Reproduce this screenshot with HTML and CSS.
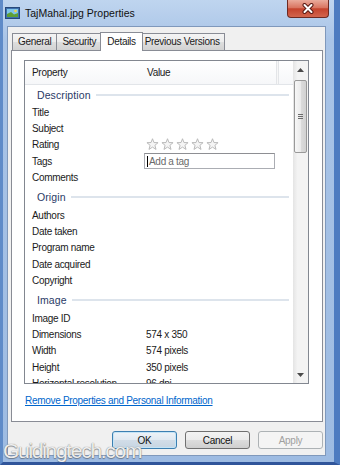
FILE: index.html
```html
<!DOCTYPE html>
<html lang="en">
<head>
    <meta charset="UTF-8">
    <title>TajMahal.jpg Properties</title>
    <link rel="stylesheet" href="styles.css">
</head>
<body>
    <div class="window">
        <!-- Barra de titulo -->
        <div class="titlebar">
            <svg class="app-icon" width="15" height="12" viewBox="0 0 15 12">
                <rect x="0.5" y="0.5" width="14" height="11" fill="#3d6fae" stroke="#27497a"/>
                <rect x="2" y="2" width="11" height="8" fill="#7fc4e9"/>
                <path d="M2 10 L2 7 L6 5 L9 7.5 L13 6 L13 10 Z" fill="#5f9f35"/>
                <circle cx="10.5" cy="4" r="1.3" fill="#f3d24c"/>
            </svg>
            <span class="title">TajMahal.jpg Properties</span>
            <div class="close-btn">
                <svg width="14" height="11" viewBox="0 0 14 11">
                    <path d="M3.5 2 L10.5 9 M10.5 2 L3.5 9" stroke="#5a1a14" stroke-width="4" stroke-linecap="round"/>
                    <path d="M3.5 2 L10.5 9 M10.5 2 L3.5 9" stroke="#ffffff" stroke-width="2" stroke-linecap="round"/>
                </svg>
            </div>
        </div>

        <div class="client">
            <div class="tabs">
                <div class="tab">General</div>
                <div class="tab">Security</div>
                <div class="tab active">Details</div>
                <div class="tab">Previous Versions</div>
            </div>

            <div class="panel">
                <div class="listbox">
                    <div class="list">
                        <div class="list-head">
                            <span class="head-prop">Property</span>
                            <span class="head-value">Value</span>
                            <span class="head-rest"></span>
                        </div>

                        <div class="group first"><span>Description</span></div>
                        <div class="row"><span>Title</span><span></span></div>
                        <div class="row"><span>Subject</span><span></span></div>
                        <div class="row"><span>Rating</span>
                            <span class="stars">
                                <svg width="13" height="13" viewBox="0 0 14 14"><path class="star" d="M7 0.8 L8.6 4.9 L13 5 L9.6 7.9 L10.8 12.3 L7 9.8 L3.2 12.3 L4.4 7.9 L1 5 L5.4 4.9 Z"/></svg>
                                <svg width="13" height="13" viewBox="0 0 14 14"><path class="star" d="M7 0.8 L8.6 4.9 L13 5 L9.6 7.9 L10.8 12.3 L7 9.8 L3.2 12.3 L4.4 7.9 L1 5 L5.4 4.9 Z"/></svg>
                                <svg width="13" height="13" viewBox="0 0 14 14"><path class="star" d="M7 0.8 L8.6 4.9 L13 5 L9.6 7.9 L10.8 12.3 L7 9.8 L3.2 12.3 L4.4 7.9 L1 5 L5.4 4.9 Z"/></svg>
                                <svg width="13" height="13" viewBox="0 0 14 14"><path class="star" d="M7 0.8 L8.6 4.9 L13 5 L9.6 7.9 L10.8 12.3 L7 9.8 L3.2 12.3 L4.4 7.9 L1 5 L5.4 4.9 Z"/></svg>
                                <svg width="13" height="13" viewBox="0 0 14 14"><path class="star" d="M7 0.8 L8.6 4.9 L13 5 L9.6 7.9 L10.8 12.3 L7 9.8 L3.2 12.3 L4.4 7.9 L1 5 L5.4 4.9 Z"/></svg>
                            </span>
                        </div>
                        <div class="row"><span>Tags</span>
                            <span class="tag-input"><span class="caret"></span>Add a tag</span>
                        </div>
                        <div class="row"><span>Comments</span><span></span></div>

                        <div class="group"><span>Origin</span></div>
                        <div class="row"><span>Authors</span><span></span></div>
                        <div class="row"><span>Date taken</span><span></span></div>
                        <div class="row"><span>Program name</span><span></span></div>
                        <div class="row"><span>Date acquired</span><span></span></div>
                        <div class="row"><span>Copyright</span><span></span></div>

                        <div class="group"><span>Image</span></div>
                        <div class="row"><span>Image ID</span><span></span></div>
                        <div class="row"><span>Dimensions</span><span>574 x 350</span></div>
                        <div class="row"><span>Width</span><span>574 pixels</span></div>
                        <div class="row"><span>Height</span><span>350 pixels</span></div>
                        <div class="row"><span>Horizontal resolution</span><span>96 dpi</span></div>
                    </div>

                    <!-- Barra de desplazamiento -->
                    <div class="scrollbar">
                        <div class="sb-btn"><svg width="7" height="4" viewBox="0 0 7 4"><path d="M0 4 L3.5 0 L7 4 Z" fill="#4a4a4a"/></svg></div>
                        <div class="sb-track">
                            <div class="sb-thumb">
                                <svg width="5" height="5" viewBox="0 0 5 5"><path d="M0 0.5 H5 M0 2.5 H5 M0 4.5 H5" stroke="#6b6b6b" stroke-width="1"/></svg>
                            </div>
                        </div>
                        <div class="sb-btn"><svg width="7" height="4" viewBox="0 0 7 4"><path d="M0 0 L3.5 4 L7 0 Z" fill="#4a4a4a"/></svg></div>
                    </div>
                </div>

                <a class="remove-link" href="#">Remove Properties and Personal Information</a>
            </div>

            <div class="buttons">
                <button class="btn default">OK</button>
                <button class="btn">Cancel</button>
                <button class="btn" disabled>Apply</button>
            </div>
        </div>

        <div class="watermark">Guidingtech.com</div>
    </div>
</body>
</html>
```

FILE: styles.css
```css
body {
    margin: 0;
    font-family: "Liberation Sans", Arial, sans-serif;
    font-size: 10px;
    letter-spacing: -0.3px;
    color: #1a1a1a;
}
.window {
    position: relative;
    width: 340px;
    height: 465px;
    box-sizing: border-box;
    display: flex;
    flex-direction: column;
    overflow: hidden;
    background: linear-gradient(180deg, #bfd5ef 0, #a9c4e7 40px, #9dbbe2 100%);
    border-left: 3px solid #5f8bc8;
    border-right: 6px solid #4d7bc0;
    border-bottom: 3px solid #30559a;
}
.titlebar {
    height: 26px;
    flex-shrink: 0;
    display: flex;
    align-items: flex-start;
}
.app-icon {
    margin: 7px 5px 0 2px;
}
.title {
    margin-top: 7px;
    font-size: 10.5px;
    line-height: 13px;
    letter-spacing: 0;
    color: #111;
}
.close-btn {
    margin-left: auto;
    margin-right: 5px;
    width: 42px;
    height: 18px;
    box-sizing: border-box;
    border: 1px solid #6d2a22;
    border-top: none;
    border-radius: 0 0 4px 4px;
    background: linear-gradient(180deg, #eaab9c 0, #d97561 45%, #c5432d 52%, #d2654d 100%);
    display: flex;
    align-items: center;
    justify-content: center;
}
.client {
    flex: 1;
    margin: 0 8px 6px 4px;
    padding: 6px 2px 0 3px;
    background: #f0f0f0;
    border: 1px solid #7f98bb;
    display: flex;
    flex-direction: column;
}
.tabs {
    position: relative;
    z-index: 1;
    display: flex;
    align-items: flex-end;
    height: 17px;
    padding-left: 1px;
}
.tab {
    height: 17px;
    box-sizing: border-box;
    padding: 0 5px;
    line-height: 16px;
    border: 1px solid #898c95;
    border-bottom: none;
    margin-left: -1px;
    background: linear-gradient(180deg, #f4f4f4 0, #ececec 50%, #dedede 50%, #d2d2d2 100%);
}
.tab:first-child {
    margin-left: 0;
}
.tab.active {
    position: relative;
    height: 19px;
    line-height: 18px;
    margin: 0 -2px -1px -2px;
    padding: 0 6px;
    background: #fff;
}
.tab:last-child {
    padding: 0 4px;
}
.panel {
    height: 372px;
    box-sizing: border-box;
    padding: 9px 13px 0 12px;
    background: #fff;
    border: 1px solid #898c95;
}
.listbox {
    height: 324px;
    box-sizing: border-box;
    display: flex;
    border: 1px solid #828790;
}
.list {
    flex: 1;
    overflow: hidden;
}
.list-head {
    height: 24px;
    box-sizing: border-box;
    display: grid;
    grid-template-columns: 121px 131px 1fr;
    align-items: stretch;
    border-bottom: 1px solid #e2e5e9;
    background: linear-gradient(180deg, #ffffff, #f6f7f9);
}
.list-head span {
    display: flex;
    align-items: center;
}
.head-prop {
    padding-left: 7px;
}
.head-value {
    padding-left: 1px;
    border-right: 1px solid #e3e5e8;
    box-shadow: 1px 0 0 #f7f7f7, 2px 0 0 #e3e5e8;
}
.group {
    height: 19px;
    display: flex;
    align-items: center;
    padding-left: 12px;
    font-size: 10.5px;
    letter-spacing: 0.1px;
    color: #2a3a66;
}
.row + .group {
    margin-top: 2px;
}
.group::after {
    content: "";
    flex: 1;
    height: 2px;
    margin: 0 4px 0 5px;
    background: #dde4ec;
}
.row {
    height: 16.4px;
    display: grid;
    grid-template-columns: 121px 1fr;
    align-items: center;
    white-space: nowrap;
}
.row > span:first-child {
    padding-left: 7px;
}
.stars {
    display: flex;
    gap: 2px;
}
.star {
    fill: #f5f5f5;
    stroke: #b5b5b5;
    stroke-width: 1;
    stroke-linejoin: round;
}
.tag-input {
    width: 131px;
    height: 16px;
    box-sizing: border-box;
    margin-left: -2px;
    padding-left: 2px;
    display: flex;
    align-items: center;
    border: 1px solid #abadb3;
    border-top-color: #8e8f93;
    color: #6a6a6a;
}
.caret {
    width: 1px;
    height: 11px;
    margin-right: 1px;
    background: #000;
}
.scrollbar {
    width: 15px;
    display: flex;
    flex-direction: column;
    background: linear-gradient(90deg, #e4e4e4, #f3f3f3 30%, #f3f3f3);
}
.sb-btn {
    height: 17px;
    display: flex;
    align-items: center;
    justify-content: center;
}
.sb-track {
    flex: 1;
    padding: 2px 1px;
}
.sb-thumb {
    height: 73px;
    box-sizing: border-box;
    display: flex;
    align-items: center;
    justify-content: center;
    border: 1px solid #999;
    border-radius: 2px;
    background: linear-gradient(90deg, #f7f7f7, #ebebeb 50%, #dcdcdc 51%, #d2d2d2);
}
.remove-link {
    display: block;
    width: fit-content;
    margin-top: 10px;
    padding-left: 1px;
    line-height: 14px;
    color: #0066cc;
    text-decoration: underline;
}
.buttons {
    display: flex;
    justify-content: flex-end;
    gap: 8px;
    margin-top: 9px;
}
.btn {
    width: 65px;
    height: 18px;
    padding: 0;
    font: inherit;
    letter-spacing: inherit;
    color: #111;
    border: 1px solid #707070;
    border-radius: 3px;
    background: linear-gradient(180deg, #f3f3f3 0, #ebebeb 50%, #dddddd 50%, #cfcfcf 100%);
}
.btn.default {
    border-color: #3c7fb1;
    box-shadow: inset 0 0 0 1px #c4e4f6;
    background: linear-gradient(180deg, #eef3f8 0, #e0e9f1 50%, #d2dde8 50%, #c7d5e2 100%);
}
.btn:disabled {
    border-color: #adb2b5;
    background: #f4f4f4;
    color: #a0a0a0;
}
.watermark {
    position: absolute;
    left: 0;
    bottom: -1px;
    font-size: 21px;
    line-height: 24px;
    letter-spacing: -1.3px;
    color: #eeeeee;
    text-shadow: 0 0 1px #6f6f6f, 0 1px 1px rgba(60, 60, 60, 0.5);
}
```
